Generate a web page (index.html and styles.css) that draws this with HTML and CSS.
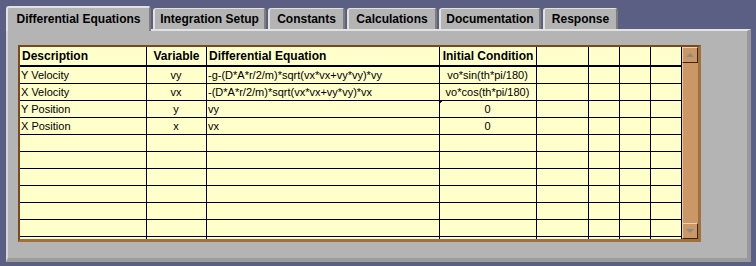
FILE: index.html
```html
<!DOCTYPE html>
<html lang="en">
<head>
    <meta charset="UTF-8">
    <title>Differential Equations</title>
    <link rel="stylesheet" href="styles.css">
</head>
<body>
    <div class="window">
        <div class="tabs">
            <div class="tab active w-diff">Differential Equations</div>
            <div class="tab w-integ">Integration Setup</div>
            <div class="tab w-const">Constants</div>
            <div class="tab w-calc">Calculations</div>
            <div class="tab w-doc">Documentation</div>
            <div class="tab w-resp">Response</div>
        </div>
        <div class="panel">
            <div class="grid">
                <div class="grid-body">
                    <table>
                        <thead>
                            <tr>
                                <th class="c-desc">Description</th>
                                <th class="c-var center">Variable</th>
                                <th class="c-eq">Differential Equation</th>
                                <th class="c-init center">Initial Condition</th>
                                <th class="c-e1"></th>
                                <th class="c-e2"></th>
                                <th class="c-e2"></th>
                                <th class="c-e2"></th>
                            </tr>
                        </thead>
                        <tbody>
                            <tr><td>Y Velocity</td><td class="center">vy</td><td>-g-(D*A*r/2/m)*sqrt(vx*vx+vy*vy)*vy</td><td class="center">vo*sin(th*pi/180)</td><td></td><td></td><td></td><td></td></tr>
                            <tr><td>X Velocity</td><td class="center">vx</td><td>-(D*A*r/2/m)*sqrt(vx*vx+vy*vy)*vx</td><td class="center">vo*cos(th*pi/180)</td><td></td><td></td><td></td><td></td></tr>
                            <tr><td>Y Position</td><td class="center">y</td><td>vy</td><td class="center cursor">0</td><td></td><td></td><td></td><td></td></tr>
                            <tr><td>X Position</td><td class="center">x</td><td>vx</td><td class="center">0</td><td></td><td></td><td></td><td></td></tr>
                            <tr><td></td><td></td><td></td><td></td><td></td><td></td><td></td><td></td></tr>
                            <tr><td></td><td></td><td></td><td></td><td></td><td></td><td></td><td></td></tr>
                            <tr><td></td><td></td><td></td><td></td><td></td><td></td><td></td><td></td></tr>
                            <tr><td></td><td></td><td></td><td></td><td></td><td></td><td></td><td></td></tr>
                            <tr><td></td><td></td><td></td><td></td><td></td><td></td><td></td><td></td></tr>
                            <tr><td></td><td></td><td></td><td></td><td></td><td></td><td></td><td></td></tr>
                            <tr><td></td><td></td><td></td><td></td><td></td><td></td><td></td><td></td></tr>
                        </tbody>
                    </table>
                </div>
                <div class="scrollbar">
                    <div class="sb-btn"><span class="arrow-up"></span></div>
                    <div class="sb-track"></div>
                    <div class="sb-btn"><span class="arrow-down"></span></div>
                </div>
            </div>
        </div>
    </div>
</body>
</html>
```

FILE: styles.css
```css
body {
    margin: 0;
    background-color: #5b5f84;
    font-family: "Liberation Sans", Arial, sans-serif;
    color: #000;
}
.window {
    padding: 6px 5px 4px 6px;
}
.tabs {
    display: flex;
    align-items: flex-end;
    gap: 2px;
    height: 23px;
    position: relative;
    z-index: 1;
}
.tab {
    box-sizing: border-box;
    height: 21px;
    line-height: 20px;
    background-color: #b4b4b4;
    border-top: 1px solid #e2e2e2;
    border-left: 2px solid #e2e2e2;
    border-right: 2px solid #7e7e7e;
    border-radius: 3px 3px 0 0;
    font-size: 12px;
    font-weight: bold;
    text-align: center;
    white-space: nowrap;
}
.tab.active {
    height: 25px;
    line-height: 22px;
    border-top: 2px solid #e2e2e2;
    margin-bottom: -2px;
    padding-bottom: 1px;
}
.w-diff { width: 145px; }
.w-integ { width: 113px; }
.w-const { width: 77px; }
.w-calc { width: 90px; }
.w-doc { width: 102px; }
.w-resp { width: 75px; }

.panel {
    box-sizing: border-box;
    height: 233px;
    background-color: #b4b4b4;
    border-top: 2px solid #e2e2e2;
    border-left: 2px solid #d6d6d6;
    border-right: 4px solid #989898;
    border-bottom: 4px solid #9c9c9c;
    padding: 14px 0 0 10px;
}
.grid {
    display: flex;
    width: 683px;
    height: 197px;
    box-sizing: border-box;
    border: 2px solid #a0703f;
    border-top-color: #7a4a1c;
    border-left-color: #7a4a1c;
    border-right-width: 3px;
    border-bottom-width: 3px;
}
.grid-body {
    width: 662px;
    height: 192px;
    overflow: hidden;
    background-color: #ffffcc;
}
table {
    border-collapse: separate;
    border-spacing: 0;
    table-layout: fixed;
    width: 662px;
}
th, td {
    box-sizing: border-box;
    border-right: 1px solid #000;
    border-bottom: 1px solid #000;
    padding: 0 2px;
    white-space: nowrap;
    overflow: hidden;
    text-align: left;
}
th {
    height: 20px;
    border-bottom-width: 2px;
    font-size: 12px;
    font-weight: bold;
    line-height: 18px;
}
td {
    height: 17px;
    font-size: 11px;
    line-height: 16px;
    padding-left: 1px;
}
th.center, td.center {
    text-align: center;
}
.cursor {
    position: relative;
}
.cursor::before {
    content: "";
    position: absolute;
    left: 0;
    top: 0;
    width: 2px;
    height: 2px;
    border-top: 1px solid #0000ff;
    border-left: 1px solid #0000ff;
    box-sizing: border-box;
}
.c-desc { width: 127px; }
.c-var { width: 60px; }
.c-eq { width: 233px; }
.c-init { width: 97px; }
.c-e1 { width: 52px; }
.c-e2 { width: 31px; }

.scrollbar {
    width: 16px;
    height: 192px;
    display: flex;
    flex-direction: column;
    background-color: #cb9767;
}
.sb-btn {
    box-sizing: border-box;
    height: 16px;
    background-color: #cb9767;
    border-top: 1px solid #ecd0b4;
    border-left: 1px solid #ecd0b4;
    border-right: 1px solid #3a2410;
    border-bottom: 1px solid #3a2410;
    display: flex;
    justify-content: center;
    align-items: center;
}
.sb-track {
    flex: 1;
    border-left: 1px solid #e6c8a8;
}
.arrow-up {
    width: 0;
    height: 0;
    border-left: 4px solid transparent;
    border-right: 4px solid transparent;
    border-bottom: 4px solid #8a8a8a;
}
.arrow-down {
    width: 0;
    height: 0;
    border-left: 4px solid transparent;
    border-right: 4px solid transparent;
    border-top: 4px solid #8a8a8a;
}
```
